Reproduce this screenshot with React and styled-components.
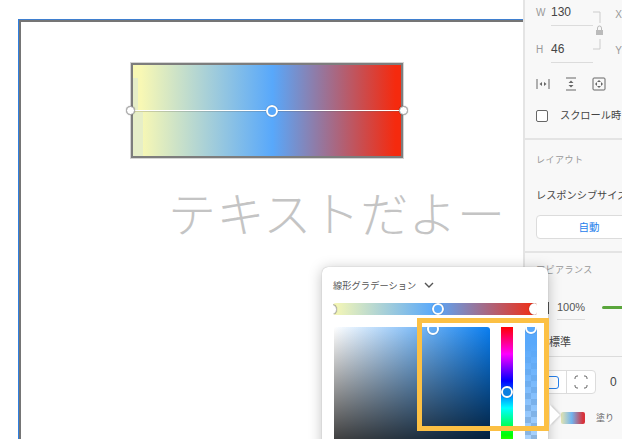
import styled, { createGlobalStyle } from "styled-components";

const GlobalStyle = createGlobalStyle`
    html, body {
        margin: 0;
        padding: 0;
        background: #fff;
    }
    body {
        font-family: "Liberation Sans", "Noto Sans CJK JP", sans-serif;
    }
`

const DimField = ({ label, value }) => (
    <Field>
        <FieldLabel>{label}</FieldLabel>
        <FieldValue>{value}</FieldValue>
    </Field>
)

const App = () => {
    return (
        <Page>
            <GlobalStyle />
            <Canvas>
                <Artboard>
                    <GradientBox>
                        <GradientLine />
                        <Handle $size={9} $border={1} $fill="#fff" $color="#aaa" $left={-7} $top={41} />
                        <Handle $size={12} $left={133} $top={40} />
                        <Handle $size={9} $border={1} $fill="#fff" $color="#aaa" $left={266} $top={41} />
                    </GradientBox>
                    <BigText>テキストだよー</BigText>
                </Artboard>
            </Canvas>

            <Inspector>
                <SizeSection>
                    <DimGroup>
                        <DimFields>
                            <DimField label="W" value="130" />
                            <DimField label="H" value="46" />
                        </DimFields>
                        <LockIcon />
                        <DimAxis>
                            <span>X</span>
                            <span>Y</span>
                        </DimAxis>
                    </DimGroup>
                    <AlignRow>
                        <svg width="14" height="14" viewBox="0 0 14 14" fill="none" stroke="#666" strokeWidth="1">
                            <path d="M1 2v10M13 2v10" />
                            <path d="M3.500 7l2.500-2v4zM10.500 7l-2.500-2v4z" fill="#666" stroke="none" />
                        </svg>
                        <svg width="14" height="14" viewBox="0 0 14 14" fill="none" stroke="#666" strokeWidth="1">
                            <path d="M2 1h10M2 13h10" />
                            <path d="M7 3.500l2.500 2.500h-5zM7 10.500l2.500-2.500h-5z" fill="#666" stroke="none" />
                        </svg>
                        <svg width="14" height="14" viewBox="0 0 14 14" fill="none" stroke="#666" strokeWidth="1">
                            <rect x="1" y="1" width="12" height="12" rx="1" />
                            <path d="M7 3l2 2h-4zM7 11l2-2h-4zM3 7l2-2v4zM11 7l-2-2v4z" fill="#666" stroke="none" />
                        </svg>
                    </AlignRow>
                    <ScrollRow>
                        <CheckBox />
                        <RowText>スクロール時</RowText>
                    </ScrollRow>
                </SizeSection>

                <LayoutSection>
                    <SectionTitle>レイアウト</SectionTitle>
                    <LayoutLabel>レスポンシブサイズ</LayoutLabel>
                    <AutoButton>自動</AutoButton>
                </LayoutSection>

                <AppearanceSection>
                    <SectionTitle>アピアランス</SectionTitle>
                    <OpacityRow>
                        <OpacityTick />
                        <OpacityValue>100%</OpacityValue>
                        <GreenBar />
                    </OpacityRow>
                    <BlendRow>標準</BlendRow>
                    <CornerRow>
                        <CornerButtons>
                            <CornerButton>
                                <CornerSquare />
                            </CornerButton>
                            <CornerButton>
                                <svg width="14" height="14" viewBox="0 0 14 14" fill="none" stroke="#666" strokeWidth="1">
                                    <path d="M1 4V3a2 2 0 0 1 2-2h1M10 1h1a2 2 0 0 1 2 2v1M13 10v1a2 2 0 0 1-2 2h-1M4 13H3a2 2 0 0 1-2-2v-1" />
                                </svg>
                            </CornerButton>
                        </CornerButtons>
                        <CornerValue>0</CornerValue>
                    </CornerRow>
                    <FillRow>
                        <FillSwatch />
                        <FillLabel>塗り</FillLabel>
                    </FillRow>
                </AppearanceSection>
            </Inspector>

            <Popover>
                <PopoverHeader>
                    線形グラデーション
                    <svg width="10" height="7" viewBox="0 0 10 7" fill="none" stroke="#555" strokeWidth="1.4">
                        <path d="M1 1l4 4 4-4" />
                    </svg>
                </PopoverHeader>
                <StopStrip>
                    <Handle $size={11} $border={1} $fill="#fff" $color="#bbb" $left={-7} $top={1} />
                    <Handle $size={12} $left={99} $top={0} />
                    <Handle $size={12} $fill="#fff" $left={196} $top={0} />
                </StopStrip>
                <PickerRow>
                    <SatField>
                        <Handle $size={12} $fill="transparent" $left={93} $top={-4} />
                    </SatField>
                    <HueBar>
                        <Handle $size={12} $fill="#0d7fe0" $left={0} $top={59} />
                    </HueBar>
                    <AlphaBar>
                        <Handle $size={12} $fill="transparent" $left={0} $top={-5} />
                    </AlphaBar>
                </PickerRow>
                <Highlight />
            </Popover>
            <PopoverArrow />
        </Page>
    )
}

export default App;

const LockIcon = () => (
    <LockSvg width="12" height="40" viewBox="0 0 12 40" fill="none">
        <path d="M0 1h7v11M7 28v10H0" stroke="#ccc" strokeWidth="1" />
        <rect x="3" y="19" width="7" height="5" fill="#bbb" />
        <path d="M4.500 19v-2a2 2 0 0 1 4 0v2" stroke="#bbb" strokeWidth="1" />
    </LockSvg>
)

const Page = styled.div`
    position: relative;
    display: flex;
    width: 622px;
    height: 439px;
    overflow: hidden;
    background: #fff;
`

const Canvas = styled.div`
    flex: 0 0 523px;
    box-sizing: border-box;
    padding: 19px 0 0 18px;
    overflow: hidden;
`

const Artboard = styled.div`
    box-sizing: border-box;
    height: 440px;
    border-top: 1px solid #3f7fcf;
    border-left: 1px solid #2f7fe0;
    box-shadow: inset 2px 2px 0 #757575;
    padding: 43px 0 0 112px;
`

const GradientBox = styled.div`
    position: relative;
    box-sizing: border-box;
    width: 272px;
    height: 95px;
    border: 2px solid #7d7d7d;
    outline: 1px solid #d4d4d4;
    background:
        linear-gradient(#e6eec8, #e6eec8) 0 100% / 10px 44px no-repeat,
        linear-gradient(#e6eec8, #e6eec8) 0 13px / 5px 32px no-repeat,
        linear-gradient(to right, #f8f8b4 3%, #58a8fb 52%, #f52a0e 98%);
`

const GradientLine = styled.div`
    position: absolute;
    left: 0;
    right: 0;
    top: 45px;
    height: 1px;
    background: #fff;
    box-shadow: 0 1px 0 #5b5b5b40;
`

const Handle = styled.div`
    position: absolute;
    left: ${(p) => p.$left}px;
    top: ${(p) => p.$top}px;
    box-sizing: border-box;
    width: ${(p) => p.$size}px;
    height: ${(p) => p.$size}px;
    border-radius: 50%;
    border: ${(p) => p.$border ?? 2}px solid ${(p) => p.$color ?? "#fff"};
    background: ${(p) => p.$fill ?? "#58a8fb"};
    box-shadow: 0 0 1px #00000088;
`

const BigText = styled.div`
    margin: 23px 0 0 37px;
    font-family: "Noto Sans CJK JP", sans-serif;
    font-size: 48px;
    font-weight: 300;
    line-height: 60px;
    letter-spacing: 0.4px;
    color: #c4c4c4;
    white-space: nowrap;
`

const Inspector = styled.div`
    flex: 0 0 99px;
    box-sizing: border-box;
    height: 439px;
    border-left: 2px solid #e4e4e4;
    background: #f8f8f8;
    overflow: hidden;
    color: #444;
`

const Section = styled.section`
    box-sizing: border-box;
    padding-left: 11px;
    border-bottom: 2px solid #e4e4e4;
    white-space: nowrap;
`

const SizeSection = styled(Section)`
    height: 140px;
    padding-top: 5px;
`

const LayoutSection = styled(Section)`
    height: 113px;
    padding-top: 14px;
`

const AppearanceSection = styled(Section)`
    border-bottom: 0;
    padding-top: 11px;
`

const DimGroup = styled.div`
    display: flex;
    align-items: flex-start;
`

const DimFields = styled.div`
    width: 59px;
    display: flex;
    flex-direction: column;
    gap: 16px;
`

const Field = styled.div`
    display: flex;
    align-items: baseline;
    height: 21px;
`

const FieldLabel = styled.span`
    width: 15px;
    font-size: 10px;
    color: #999;
`

const FieldValue = styled.span`
    flex: 1;
    height: 20px;
    font-size: 12px;
    line-height: 15px;
    color: #444;
    border-bottom: 1px solid #dcdcdc;
`

const LockSvg = styled.svg`
    margin: 6px 0 0 0;
    flex: none;
`

const DimAxis = styled.div`
    margin: 4px 0 0 10px;
    display: flex;
    flex-direction: column;
    gap: 24px;
    font-size: 10px;
    line-height: 12px;
    color: #999;
`

const AlignRow = styled.div`
    margin: 14px 0 0 0;
    display: flex;
    gap: 14px;
`

const ScrollRow = styled.div`
    margin-top: 17px;
    display: flex;
    align-items: center;
    gap: 12px;
`

const CheckBox = styled.div`
    flex: none;
    box-sizing: border-box;
    width: 12px;
    height: 12px;
    border: 1px solid #666;
    border-radius: 2px;
    background: #fff;
`

const RowText = styled.div`
    font-size: 10.2px;
    line-height: 16px;
    color: #444;
`

const LayoutLabel = styled(RowText)`
    margin-top: 22px;
`

const SectionTitle = styled.div`
    font-size: 9px;
    line-height: 12px;
    letter-spacing: 0.5px;
    color: #999;
`

const AutoButton = styled.div`
    margin-top: 11px;
    box-sizing: border-box;
    width: 106px;
    height: 24px;
    border: 1px solid #dcdcdc;
    border-radius: 4px;
    background: #fff;
    font-size: 10.5px;
    line-height: 22px;
    text-align: center;
    color: #2680eb;
`

const OpacityRow = styled.div`
    margin: 24px 0 0 12px;
    display: flex;
    align-items: flex-start;
`

const OpacityTick = styled.div`
    flex: none;
    width: 1px;
    height: 12px;
    margin: 2px 8px 0 0;
    background: #555;
`

const OpacityValue = styled.div`
    width: 35px;
    height: 19px;
    font-size: 11px;
    line-height: 15px;
    color: #555;
    border-bottom: 1px solid #dcdcdc;
`

const GreenBar = styled.div`
    flex: none;
    width: 30px;
    height: 3px;
    margin: 6px 0 0 17px;
    border-radius: 2px;
    background: #5aa63c;
`

const BlendRow = styled.div`
    margin: 15px 0 0 13px;
    width: 90px;
    height: 21px;
    font-size: 11px;
    line-height: 15px;
    color: #444;
    border-bottom: 1px solid #dcdcdc;
`

const CornerRow = styled.div`
    margin: 13px 0 0 1px;
    display: flex;
    align-items: center;
`

const CornerButtons = styled.div`
    flex: none;
    display: flex;
    box-sizing: border-box;
    height: 24px;
    border: 1px solid #dcdcdc;
    border-radius: 4px;
    background: #fff;
`

const CornerButton = styled.div`
    width: 28px;
    display: flex;
    align-items: center;
    justify-content: center;
    & + & {
        border-left: 1px solid #dcdcdc;
    }
`

const CornerSquare = styled.div`
    box-sizing: border-box;
    width: 13px;
    height: 13px;
    border: 1px solid #2680eb;
    border-radius: 3px;
`

const CornerValue = styled.div`
    margin-left: 14px;
    font-size: 12px;
    color: #444;
`

const FillRow = styled.div`
    margin: 17px 0 0 25px;
    display: flex;
    align-items: center;
    gap: 11px;
`

const FillSwatch = styled.div`
    flex: none;
    width: 24px;
    height: 12px;
    border-radius: 2px;
    background: linear-gradient(to right, #e4e4b0, #70b4f0 45%, #d8323a 92%);
`

const FillLabel = styled.div`
    font-size: 9px;
    color: #666;
`

const Popover = styled.div`
    position: absolute;
    left: 322px;
    top: 267px;
    box-sizing: border-box;
    width: 226px;
    height: 200px;
    padding: 11px 11px 0 11px;
    border-radius: 6px;
    background: #fff;
    box-shadow: 0 0 1px #00000055, 0 2px 14px #00000040;
`

const PopoverHeader = styled.div`
    display: flex;
    align-items: center;
    gap: 8px;
    height: 14px;
    font-size: 9.2px;
    letter-spacing: 0.1px;
    color: #555;
`

const StopStrip = styled.div`
    position: relative;
    overflow: hidden;
    margin: 11px 0 0 0;
    width: 204px;
    height: 12px;
    border-radius: 3px;
    background: linear-gradient(to right, #f8f8b4, #58a8fb 50%, #f52a0e);
`

const PickerRow = styled.div`
    margin-top: 12px;
    display: flex;
`

const SatField = styled.div`
    position: relative;
    overflow: hidden;
    flex: none;
    margin-left: 1px;
    width: 156px;
    height: 150px;
    border-radius: 3px;
    background:
        linear-gradient(to top, #000, transparent),
        linear-gradient(to right, #fff, #0a7ef0);
`

const HueBar = styled.div`
    position: relative;
    flex: none;
    margin-left: 11px;
    width: 12px;
    height: 162px;
    background: linear-gradient(to bottom, #f00, #f0f 16.7%, #00f 33.3%, #0ff 50%, #0f0 66.7%, #ff0 83.3%, #f00);
`

const AlphaBar = styled.div`
    position: relative;
    overflow: hidden;
    flex: none;
    margin-left: 12px;
    width: 12px;
    height: 162px;
    background:
        linear-gradient(to bottom, #58a8fb 10%, #58a8fb00 130%),
        conic-gradient(#c4c4c4 25%, #fff 0 50%, #c4c4c4 0 75%, #fff 0) 0 0 / 12px 12px;
`

const Highlight = styled.div`
    position: absolute;
    left: 95px;
    top: 51px;
    box-sizing: border-box;
    width: 132px;
    height: 113px;
    border: 5px solid #fcc044;
`

const PopoverArrow = styled.div`
    position: absolute;
    left: 550px;
    top: 405px;
    width: 0;
    height: 0;
    border-style: solid;
    border-width: 10px 0 10px 10px;
    border-color: transparent transparent transparent #fff;
    filter: drop-shadow(1px 0 1px #00000033);
`
